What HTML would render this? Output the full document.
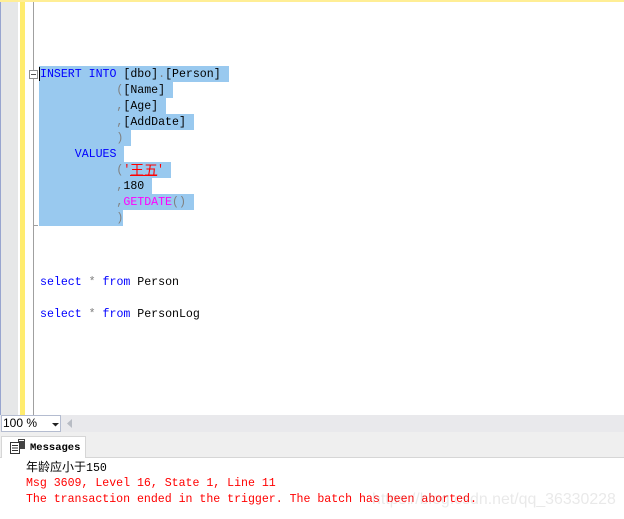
<!DOCTYPE html>
<html><head><meta charset="utf-8"><style>
html,body{margin:0;padding:0;background:#fff}
body{width:624px;height:519px;position:relative;overflow:hidden}
.a{position:absolute}
.t{position:absolute;left:40px;margin-top:1px;font:11.6px/16px "Liberation Mono","Noto Sans CJK SC",monospace;white-space:pre;letter-spacing:-.01px;color:#000}
.m{position:absolute;left:26px;font:11.6px/16px "Liberation Mono","Noto Sans CJK SC",monospace;white-space:pre;color:#f00;letter-spacing:-.02px}
.b{color:#00f}.g{color:#808080}.r{color:#f00}.p{color:#f0f}
.s{position:absolute;left:39px;height:16px;background:#99c9ef}
</style></head><body>
<div class="a" style="left:0;top:0;width:624px;height:2px;background:#ffee95"></div>
<div class="a" style="left:0;top:2px;width:1px;height:413px;background:#98a5cf"></div>
<div class="a" style="left:1px;top:2px;width:17px;height:413px;background:#e6e7e8"></div>
<div class="a" style="left:20px;top:2px;width:5px;height:413px;background:#ffec6e"></div>
<div class="a" style="left:33px;top:2px;width:1px;height:413px;background:#a0a0a0"></div>
<div class="s" style="top:66px;width:190px"></div>
<div class="s" style="top:82px;width:134px"></div>
<div class="s" style="top:98px;width:127px"></div>
<div class="s" style="top:114px;width:155px"></div>
<div class="s" style="top:130px;width:92px"></div>
<div class="s" style="top:146px;width:85px"></div>
<div class="s" style="top:162px;width:132px"></div>
<div class="s" style="top:178px;width:113px"></div>
<div class="s" style="top:194px;width:155px"></div>
<div class="s" style="top:210px;width:84px"></div>
<div class="a" style="left:29px;top:70px;width:7px;height:7px;border:1px solid #909090;background:#fff"></div>
<div class="a" style="left:31px;top:74px;width:5px;height:1px;background:#555"></div>
<div class="a" style="left:34px;top:225px;width:4px;height:1px;background:#a0a0a0"></div>
<div class="a" style="left:39px;top:67px;width:1px;height:14px;background:#000"></div>
<div class="t" style="top:66px"><span class="b">INSERT INTO</span> [dbo]<span class="g">.</span>[Person]</div>
<div class="t" style="top:82px">           <span class="g">(</span>[Name]</div>
<div class="t" style="top:98px">           <span class="g">,</span>[Age]</div>
<div class="t" style="top:114px">           <span class="g">,</span>[AddDate]</div>
<div class="t" style="top:130px">           <span class="g">)</span></div>
<div class="t" style="top:146px">     <span class="b">VALUES</span></div>
<div class="t" style="top:162px">           <span class="g">(</span><span class="r">'</span></div>
<div class="a" style="left:130px;top:162px;font:14px/16px 'WenQuanYi Zen Hei','Noto Sans CJK SC',sans-serif;color:#f00;white-space:pre">王五</div>
<div class="a" style="left:130px;top:175px;width:27px;height:1px;background:#f00"></div>
<div class="t" style="top:162px;left:157px"><span class="r">'</span></div>
<div class="t" style="top:178px">           <span class="g">,</span>180</div>
<div class="t" style="top:194px">           <span class="g">,</span><span class="p">GETDATE</span><span class="g">()</span></div>
<div class="t" style="top:210px">           <span class="g">)</span></div>
<div class="t" style="top:274px"><span class="b">select</span> <span class="g">*</span> <span class="b">from</span> Person</div>
<div class="t" style="top:306px"><span class="b">select</span> <span class="g">*</span> <span class="b">from</span> PersonLog</div>
<div class="a" style="left:0;top:415px;width:624px;height:17px;background:#e9e9ec"></div>
<div class="a" style="left:1px;top:415px;width:58px;height:15px;background:#fff;border:1px solid #b4bcd0"></div>
<div class="a" style="left:3px;top:416px;font:12px/15px 'Liberation Sans',sans-serif;color:#000;white-space:pre">100 %</div>
<svg class="a" style="left:0;top:415px" width="80" height="17"><path d="M52 8h7l-3.500 3.500z" fill="#222"/><path d="M72 4v9l-5-4.500z" fill="#b8bcc4"/></svg>
<div class="a" style="left:0;top:432px;width:624px;height:25px;background:#efefef"></div>
<div class="a" style="left:0;top:457px;width:624px;height:1px;background:#d6d6d6"></div>
<div class="a" style="left:1px;top:436px;width:85px;height:22px;background:#fff;border:1px solid #d6d6d6;border-bottom:0;box-sizing:border-box"></div>
<svg class="a" style="left:8px;top:437px" width="18" height="18"><rect x="10" y="2" width="7" height="10" fill="#444"/><rect x="11" y="3" width="5" height="1" fill="#fff"/><rect x="2.500" y="5.500" width="9" height="11" fill="#fff" stroke="#333"/><path d="M4 8.500h6M4 11h6M4 13.500h6" stroke="#333"/></svg>
<div class="a" style="left:30px;top:440px;font:bold 10.500px/16px 'Liberation Mono',monospace;color:#000;white-space:pre">Messages</div>
<div class="a" style="left:26px;top:460px;font:11.6px/16px 'Liberation Mono','Noto Sans CJK SC',monospace;color:#000;white-space:pre"><span style="font-size:12px">年龄应小于</span>150</div>
<div class="m" style="top:476px">Msg 3609, Level 16, State 1, Line 11</div>
<div class="m" style="top:492px">The transaction ended in the trigger. The batch has been aborted.</div>
<div class="a" style="left:372px;top:491px;font:15.9px/18px 'Liberation Sans',sans-serif;color:rgba(120,120,120,.16);white-space:pre">https://blog.csdn.net/qq_36330228</div>
</body></html>
